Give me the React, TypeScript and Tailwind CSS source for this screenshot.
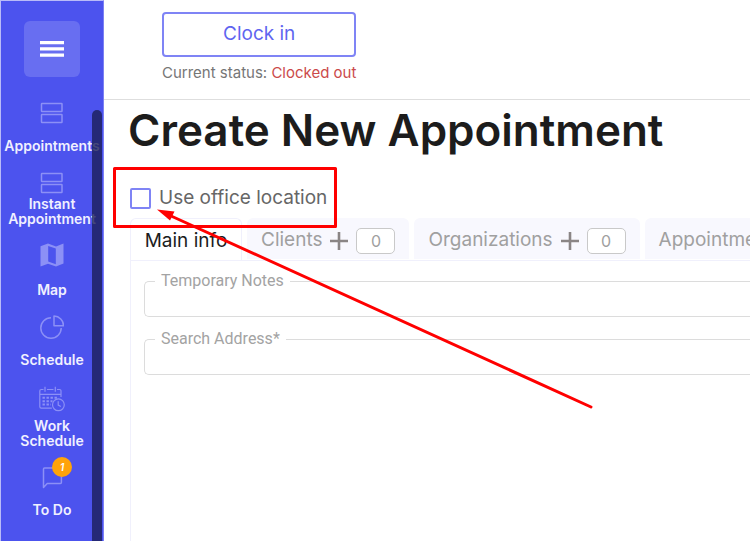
import type { ReactNode } from "react";

interface NavItem {
  label: string;
  icon: ReactNode;
  gap: string;
  badge?: number;
}

interface Tab {
  name: string;
  count?: number;
}

const RowsIcon = () => (
  <svg width="24" height="24" viewBox="0 0 24 24" fill="none" stroke="currentColor" strokeWidth="1.5">
    <rect x="1.5" y="2.5" width="20.5" height="8" rx="0.5" />
    <rect x="1.5" y="13.5" width="20.5" height="8" rx="0.5" />
  </svg>
);

const MapIcon = () => (
  <svg width="24" height="24" viewBox="0 0 24 24" fill="currentColor">
    <path
      fillRule="evenodd"
      d="M0.5 3.2 8 0.6l8 2.8L23.5 0.5v20L16 23.5l-8-2.8-7.5 2.8zM8.2 3v15.6l7.6 2.6V5.6z"
    />
  </svg>
);

const PieIcon = () => (
  <svg width="24" height="24" viewBox="0 0 24 24" fill="none" stroke="currentColor" strokeWidth="1.5">
    <path d="M11 2.8A10.2 10.2 0 1 0 21.2 13" />
    <path d="M14 1v9.8h9.5A9.7 9.7 0 0 0 14 1z" strokeLinejoin="round" />
  </svg>
);

const CalendarIcon = () => (
  <svg width="26" height="26" viewBox="0 0 26 26" fill="none" stroke="currentColor" strokeWidth="1.2">
    <path d="M4.5 3.5H2.2a1.4 1.4 0 0 0-1.4 1.4v15.9a1.4 1.4 0 0 0 1.4 1.4h10.6M8 3.5h6.5M18 3.5h2.6a1.4 1.4 0 0 1 1.4 1.4V11M.8 8.3H22M6 .8v5M16.3.8v5" />
    <path
      d="M3.5 11.8H19M3.5 15.2h10M3.5 18.6h8.5"
      strokeWidth="2"
      strokeDasharray="2.4 1.6"
    />
    <circle cx="19.4" cy="18.8" r="5.9" />
    <path d="M19.2 15.3v3.8l2.6 1.4" />
  </svg>
);

const ChatIcon = () => (
  <svg width="24" height="24" viewBox="0 0 24 24" fill="none" stroke="currentColor" strokeWidth="1.5">
    <path d="M3.5 22.5V4a1 1 0 0 1 1-1h15.9a1 1 0 0 1 1 1v13.6a1 1 0 0 1-1 1H7.2z" strokeLinejoin="round" />
  </svg>
);

const navItems: NavItem[] = [
  { label: "Appointments", icon: <RowsIcon />, gap: "gap-1.5 mb-2.5" },
  { label: "Instant Appointment", icon: <RowsIcon />, gap: "gap-0.5 mb-4" },
  { label: "Map", icon: <MapIcon />, gap: "gap-2 mb-2.5" },
  { label: "Schedule", icon: <PieIcon />, gap: "gap-1.5 mb-3" },
  { label: "Work Schedule", icon: <CalendarIcon />, gap: "gap-2 mb-4" },
  { label: "To Do", icon: <ChatIcon />, gap: "gap-1.5", badge: 1 },
];

const tabs: Tab[] = [
  { name: "Clients", count: 0 },
  { name: "Organizations", count: 0 },
  { name: "Appointments", count: 0 },
];

function Sidebar() {
  return (
    <aside className="relative flex w-26 shrink-0 flex-col items-center overflow-hidden border-t border-r border-l border-[#b9bbf8] border-r-[#7c81f3] bg-[#4c53ee] pt-5">
      <button
        type="button"
        aria-label="Toggle menu"
        className="flex size-14 shrink-0 items-center justify-center rounded-md bg-[#686ef1] text-white"
      >
        <svg width="24" height="18" viewBox="0 0 24 18" fill="currentColor">
          <path d="M0 1h24v3.2H0zM0 7.3h24v3.2H0zM0 13.6h24v3.2H0z" />
        </svg>
      </button>
      <nav className="mt-6 flex w-full flex-col">
        {navItems.map((item) => (
          <a key={item.label} href="#" className={`flex flex-col items-center ${item.gap}`}>
            <span className="relative flex h-6 items-center text-[#8c90f6]">
              {item.icon}
              {item.badge && (
                <span className="absolute -top-2 left-3 flex size-5 items-center justify-center rounded-full bg-[#ffa30a] text-[10px] font-semibold text-white italic">
                  {item.badge}
                </span>
              )}
            </span>
            <span className="flex h-[30px] w-24 items-center justify-center pb-0.5 text-center text-sm leading-[15px] font-semibold text-[#f0f0ff]">
              {item.label}
            </span>
          </a>
        ))}
      </nav>
      <div className="absolute top-[109px] right-px bottom-0 w-[10px] rounded-t-full bg-[#1c1f58]/80" />
    </aside>
  );
}

function TabButton({ tab }: { tab: Tab }) {
  return (
    <div className="flex h-[41px] shrink-0 items-center gap-[7px] rounded-t-md bg-[#f8f8fe] px-3.5 pt-1 text-[#a0a0a0]">
      <button type="button" role="tab" className="text-[19px]">
        {tab.name}
      </button>
      <button type="button" aria-label={`Add ${tab.name}`} className="text-[#8a8585]">
        <svg width="20" height="20" viewBox="0 0 20 20" fill="none" stroke="currentColor" strokeWidth="2.6">
          <path d="M10 1v18M1 10h18" />
        </svg>
      </button>
      <span className="flex h-[26px] w-[39px] items-center justify-center rounded-[5px] border border-[#c9c9c9] bg-white text-base">
        {tab.count}
      </span>
    </div>
  );
}

function Field({ id, label }: { id: string; label: string }) {
  return (
    <fieldset className="rounded-l-[5px] border border-r-0 border-[#dcdcdc] pl-2.5">
      <legend className="px-1.5 font-[Roboto,sans-serif] text-base leading-4 text-[#a3a3a3]">
        <label htmlFor={id}>{label}</label>
      </legend>
      <input id={id} type="text" className="h-[27px] w-full px-2 text-base outline-none" />
    </fieldset>
  );
}

export default function App() {
  return (
    <div className="relative flex h-screen overflow-hidden bg-white font-[Inter,sans-serif] text-[#1c1c1c]">
      <Sidebar />
      <main className="flex min-w-0 flex-1 flex-col">
        <header className="flex border-b border-[#dedede] pt-3 pb-3.5 pl-[58px]">
          <div className="flex flex-col items-center">
            <button
              type="button"
              className="h-[45px] w-[194px] rounded border-2 border-[#7f84f5] text-[19px] text-[#5f65f0]"
            >
              Clock in
            </button>
            <p className="mt-1 text-[15px] leading-6 text-[#767676]">
              Current status: <span className="text-[#cb4a4a]">Clocked out</span>
            </p>
          </div>
        </header>

        <h1 className="mt-1 ml-6 text-[44px] leading-[52px] font-semibold whitespace-nowrap">
          Create New Appointment
        </h1>

        <label className="mt-[30px] ml-[26px] flex items-center gap-2 text-[19px] leading-6 text-[#666]">
          <input
            type="checkbox"
            className="size-[21px] appearance-none rounded-xs border-2 border-[#7f84f5]"
          />
          Use office location
        </label>

        <section className="mt-2 ml-[26px] flex flex-1 flex-col">
          <div role="tablist" className="flex gap-[5px] overflow-hidden">
            <button
              type="button"
              role="tab"
              aria-selected="true"
              className="h-[42px] w-[112px] shrink-0 rounded-t-md border border-b-0 border-[#f0f0fc] pt-1 text-[19px] whitespace-nowrap"
            >
              Main info
            </button>
            {tabs.map((tab) => (
              <TabButton key={tab.name} tab={tab} />
            ))}
          </div>
          <div className="flex flex-1 flex-col gap-3.5 border-t border-l border-[#f0f0fc] pt-3 pl-[13px]">
            <Field id="notes" label="Temporary Notes" />
            <Field id="address" label="Search Address*" />
          </div>
        </section>
      </main>

      <svg
        className="pointer-events-none absolute top-0 left-0"
        width="750"
        height="541"
        viewBox="0 0 750 541"
        fill="none"
        stroke="#ff0000"
        strokeWidth="3"
      >
        <rect x="114.5" y="168.5" width="221" height="58" strokeLinejoin="round" />
        <path d="M170 215.5 591 407" strokeLinecap="round" />
        <path d="M157 209.5 174.5 211.5 170 220.5z" fill="#ff0000" stroke="none" />
      </svg>
    </div>
  );
}
